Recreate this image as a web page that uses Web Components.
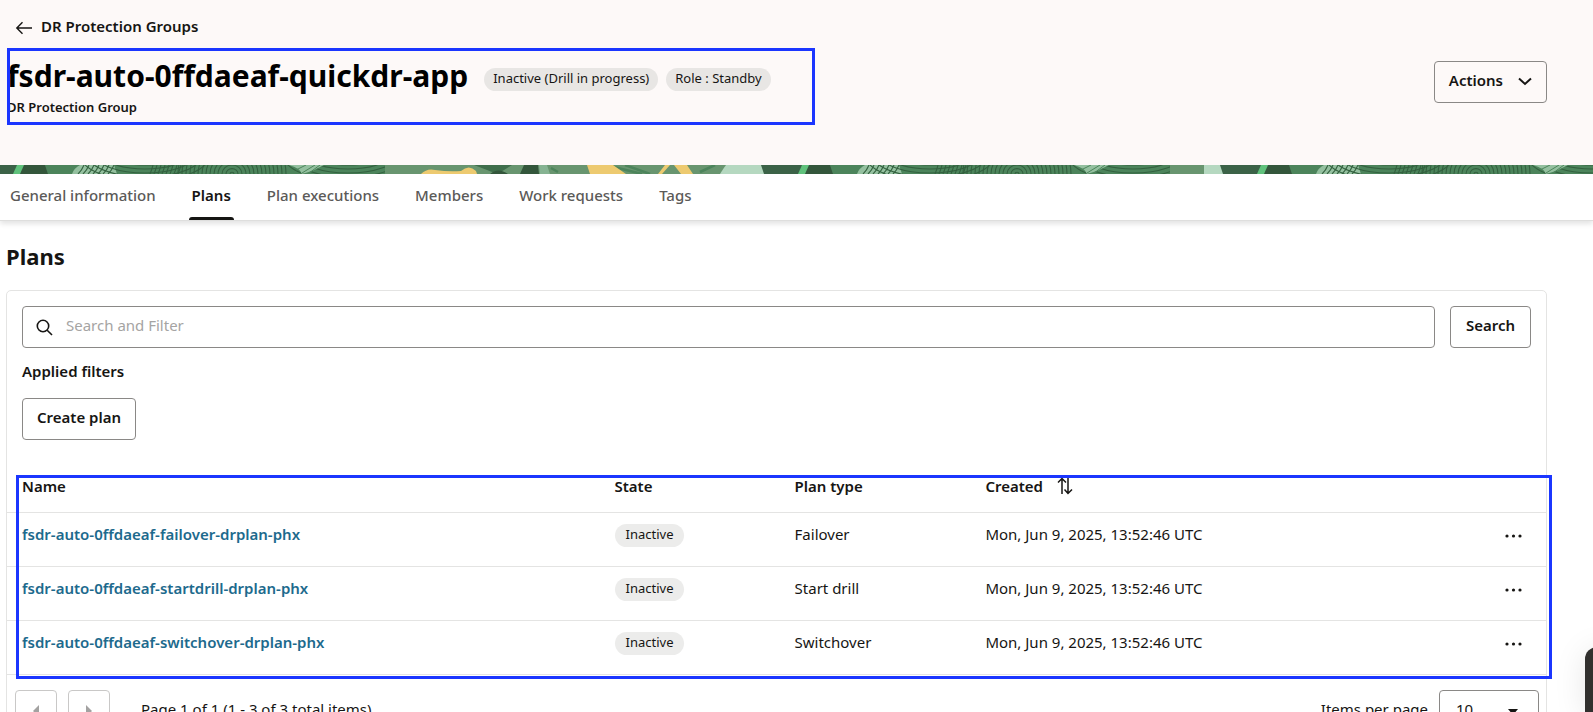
<!DOCTYPE html>
<html lang="en">
<head>
<meta charset="utf-8">
<title>DR Protection Group</title>
<style>
  html, body { margin: 0; height: 100%; }
  body {
    overflow: hidden;
    background: #fff;
    color: #161513;
    font: 15px/24px "Noto Sans", "Open Sans", sans-serif;
    --line: #e4e4e3;
    --control: #8a8886;
    --mark: #1b36ff;
  }
</style>
</head>
<body>
<group-page></group-page>

<template id="group-page">
  <style>
    :host { display: block; position: relative; height: 100vh; overflow: hidden; }
  </style>
  <page-header></page-header>
  <accent-strip></accent-strip>
  <tab-bar></tab-bar>
  <plans-panel></plans-panel>
  <help-handle></help-handle>
</template>

<template id="page-header">
  <style>
    :host { display: flex; justify-content: space-between; align-items: flex-start; height: 165px; background: #fdf9f8; padding: 0 46px 0 7px; box-sizing: border-box; }
    .back { display: inline-flex; align-items: center; gap: 8px; margin: 14px 0 10px 8px; color: inherit; text-decoration: none; font-weight: 600; }
    .back svg { margin-top: 4px; }
    .title { position: relative; width: 808px; height: 77px; }
    .row { display: flex; align-items: center; gap: 8px; padding-top: 8px; }
    h1 { margin: 0 8px 0 0; font-size: 30px; line-height: 40px; font-weight: 700; color: #000; }
    .row status-badge { margin-top: 6px; --badge: #e8e6e4; }
    p { margin: 1px 0 0; font-size: 13px; line-height: 20px; font-weight: 600; }
    ui-button { margin-top: 61px; }
  </style>
  <div>
    <a class="back" href="#">
      <svg width="18" height="14" viewBox="0 0 18 14" fill="none" stroke="#161513" stroke-width="1.4"><path d="M17 7H2M7.5 1.2 1.8 7l5.7 5.800"/></svg>
      <span>DR Protection Groups</span>
    </a>
    <div class="title">
      <div class="row">
        <h1>fsdr-auto-0ffdaeaf-quickdr-app</h1>
        <status-badge>Inactive (Drill in progress)</status-badge>
        <status-badge>Role : Standby</status-badge>
      </div>
      <p>DR Protection Group</p>
      <mark-frame></mark-frame>
    </div>
  </div>
  <ui-button>Actions
    <svg slot="icon" width="14" height="9" viewBox="0 0 14 9" fill="none" stroke="#161513" stroke-width="2"><path d="M1 1.500l6 5.500 6-5.500"/></svg>
  </ui-button>
</template>

<template id="status-badge">
  <style>
    :host { display: inline-block; padding: 0 var(--badge-pad, 9px); height: 23px; border-radius: 12px; background: var(--badge, #ececeb); font-size: 13px; line-height: 20px; white-space: nowrap; box-sizing: border-box; }
  </style>
  <slot></slot>
</template>

<template id="mark-frame">
  <style>
    :host { position: absolute; inset: var(--frame-inset, 0); border: 3px solid var(--mark); pointer-events: none; }
  </style>
</template>

<template id="ui-button">
  <style>
    :host { display: inline-block; }
    button { display: flex; align-items: center; gap: 15px; height: 42px; padding: 0 var(--button-pad, 14px) 4px; border: 1px solid var(--control); border-radius: 4px; background: transparent; color: inherit; font: inherit; font-weight: 600; white-space: nowrap; }
    ::slotted(svg) { margin-top: 2px; }
    .icon:not(.used) { display: none; }
  </style>
  <button type="button"><span><slot></slot></span><span class="icon"><slot name="icon"></slot></span></button>
</template>

<template id="accent-strip">
  <style>
    :host { display: block; height: 9px; overflow: hidden; background: #68956f; }
    svg { display: block; width: 100%; height: 9px; }
  </style>
  <svg aria-hidden="true">
    <defs>
      <clipPath id="field"><path d="M72 9Q74 3 80 0H385V9z"/></clipPath>
      <g id="tile">
        <path fill="#b5d8c0" d="M-60 9Q-56 4-54 0H0V9z"/>
        <path fill="#3b6247" d="M-24 0H50V9H-21z"/>
        <path fill="#33563b" d="M23 0h22l3 9H20z"/>
        <path fill="#60c27c" d="M17 0h7l-4 9h-7z"/>
        <path fill="#4c845b" d="M45 0H385V9H48z"/>
        <path fill="#94c09f" d="M72 9Q74 3 80 0H114l3 9z"/>
        <g clip-path="url(#field)" fill="none" stroke="#33613f" stroke-width="1.100" class="rings"></g>
        <path fill="#94c09f" d="M289 0H324L312 6 302 9Q300 3 289 0z"/>
        <path d="M296 5l10-5M302 8l13-8M309 8l11-8" stroke="#4c845b" fill="none"/>
        <path fill="#68956f" d="M385 0H767V9H385z"/>
        <path fill="#edca70" d="M421 9Q427 3 435 5 449 7 461 6 469-1 476 6L477 9z"/>
        <path fill="#3f6e4b" d="M474 0h38l-8 5-7 4-10-4z"/>
        <path fill="#33563b" d="M490 9Q498 2 508 9zM524 0h14l1 9H520z"/>
        <path fill="#86b392" d="M539 0h8l3 9H540z"/>
        <path d="M606 0l36 9M625 0l25 9M700 7l15-7M551 3l7 4" stroke="#4c845b" stroke-width="2.500"/>
        <path fill="#edca70" d="M587 0h26l13 9H590zM665 0h5l-8 9h-4zM674 0h13l6 9H681z"/>
        <path fill="#b5d8c0" d="M720 9Q723 4 726 0H763l3 9z"/>
      </g>
    </defs>
    <use href="#tile"/>
    <use href="#tile" x="785"/>
    <svg x="1204" width="800" height="9"><use href="#tile" x="40"/></svg>
  </svg>
</template>

<template id="tab-bar">
  <style>
    :host { display: block; height: 46px; background: #fff; border-bottom: 1px solid #dededd; box-shadow: 0 3px 5px #0000001c; }
    nav { display: flex; gap: 30px; padding-left: 7px; height: 100%; }
    a { padding: 9px 3px 0; box-sizing: border-box; color: #5b5a58; font-weight: 500; text-decoration: none; border-bottom: 3px solid transparent; white-space: nowrap; }
    a[aria-current] { position: relative; color: #161513; font-weight: 600; }
    a[aria-current]::after { content: ""; position: absolute; left: 0; right: 0; bottom: -3px; height: 3px; border-radius: 3px 3px 0 0; background: #161513; }
  </style>
  <nav>
    <a href="#">General information</a>
    <a href="#" aria-current="page">Plans</a>
    <a href="#">Plan executions</a>
    <a href="#">Members</a>
    <a href="#">Work requests</a>
    <a href="#">Tags</a>
  </nav>
</template>

<template id="plans-panel">
  <style>
    :host { display: block; padding: 19px 46px 0 6px; }
    h2 { margin: 0 0 18px; font-size: 22px; line-height: 32px; font-weight: 700; }
    .card { border: 1px solid var(--line); border-radius: 5px; }
    .tools { padding: 15px; display: grid; gap: 12px; }
    h3 { margin: 0; font-size: 15px; line-height: 22px; font-weight: 600; }
    .create { padding-top: 4px; }
  </style>
  <h2>Plans</h2>
  <div class="card">
    <div class="tools">
      <search-row></search-row>
      <h3>Applied filters</h3>
      <div class="create"><ui-button>Create plan</ui-button></div>
    </div>
    <plans-table></plans-table>
    <page-controls></page-controls>
  </div>
</template>

<template id="search-row">
  <style>
    :host { display: block; --button-pad: 15px; }
    form { display: flex; gap: 15px; }
    label { flex: 1; display: flex; align-items: center; gap: 13px; height: 42px; box-sizing: border-box; border: 1px solid var(--control); border-radius: 4px; padding-left: 13px; }
    input { flex: 1; border: 0; outline: 0; padding: 0 0 4px; background: none; font: inherit; color: inherit; }
    input::placeholder { color: #a5a4a3; opacity: 1; }
  </style>
  <form>
    <label>
      <svg width="17" height="17" viewBox="0 0 17 17" fill="none" stroke="#161513" stroke-width="1.600"><circle cx="7" cy="7" r="5.700"/><path d="M11.200 11.200 16 16"/></svg>
      <input type="text" placeholder="Search and Filter" aria-label="Search and Filter">
    </label>
    <ui-button>Search</ui-button>
  </form>
</template>

<template id="plans-table">
  <style>
    :host { display: block; position: relative; margin-top: 20px; --frame-inset: 0 -6px -4px 9px; --badge-pad: 11px; }
    table { width: 100%; border-collapse: separate; border-spacing: 0; table-layout: fixed; }
    th, td { padding: 0 0 0 15px; text-align: left; vertical-align: top; border-bottom: 1px solid var(--line); box-sizing: border-box; }
    th { height: 38px; font-weight: 600; }
    td { height: 54px; padding-top: 9px; }
    th { line-height: 22px; }
    .name { width: 38.5%; }
    .state { width: 11.7%; }
    .type { width: 12.400%; }
    .more { width: 55px; }
    td a { color: #1d6a8d; font-weight: 600; text-decoration: none; }
    td status-badge { vertical-align: top; margin-top: 2px; }
    .sort { display: inline-flex; gap: 14px; align-items: center; height: 22px; }
    .menu { border: 0; background: none; padding: 0; display: block; margin: 12px 0 0; line-height: 0; }
    td:last-child { padding-left: 14px; }
  </style>
  <table>
    <thead>
      <tr>
        <th class="name">Name</th>
        <th class="state">State</th>
        <th class="type">Plan type</th>
        <th><span class="sort">Created
          <svg width="16" height="18" viewBox="0 0 16 18" fill="none" stroke="#161513" stroke-width="1.500"><path d="M5 17V1.500M1 5.500l4-4 4 4M11 1v15.500M7.500 12.500l3.500 4 4-4"/></svg></span></th>
        <th class="more" aria-label="Row actions"></th>
      </tr>
    </thead>
    <tbody></tbody>
  </table>
  <mark-frame></mark-frame>
</template>

<template id="page-controls">
  <style>
    :host { display: flex; justify-content: space-between; padding: 15px 7px 12px 8px; }
    .group { display: flex; align-items: center; gap: 11px; }
    .step { width: 42px; height: 42px; padding: 0; border: 1px solid #c9c8c7; border-radius: 4px; background: #fff; display: grid; place-items: center; }
    .count { margin-left: 20px; padding-bottom: 4px; }
    label { display: flex; align-items: center; gap: 11px; }
    label > span:first-child { padding-bottom: 4px; }
    .box { position: relative; display: block; }
    select { appearance: none; width: 100px; height: 42px; padding: 0 16px 4px; border: 1px solid var(--control); border-radius: 4px; background: #fff; font: inherit; color: inherit; }
    .box svg { position: absolute; right: 21px; top: 19px; pointer-events: none; }
  </style>
  <div class="group">
    <button class="step" type="button" aria-label="Previous page"><svg width="8" height="12" viewBox="0 0 8 12"><path fill="#a3a2a1" d="M7 0v12L1 6z"/></svg></button>
    <button class="step" type="button" aria-label="Next page"><svg width="8" height="12" viewBox="0 0 8 12"><path fill="#a3a2a1" d="M1 0v12l6-6z"/></svg></button>
    <span class="count">Page 1 of 1 (1 - 3 of 3 total items)</span>
  </div>
  <label>
    <span>Items per page</span>
    <span class="box"><select><option>10</option><option>25</option></select><svg width="10" height="6" viewBox="0 0 10 6"><path fill="#161513" d="M0 0h10L5 6z"/></svg></span>
  </label>
</template>

<template id="help-handle">
  <style>
    :host { position: absolute; right: -32px; bottom: 0; width: 40px; height: 65px; background: #31302e; border-radius: 12px 0 0 0; box-shadow: 0 4px 32px #0000001a; }
  </style>
</template>

<script>
  const define = (name, setup) => customElements.define(name, class extends HTMLElement {
    constructor() {
      super();
      const root = this.attachShadow({ mode: "open" });
      root.append(document.getElementById(name).content.cloneNode(true));
      if (setup) setup(root, this);
    }
  });

  const plans = [
    ["fsdr-auto-0ffdaeaf-failover-drplan-phx", "Failover"],
    ["fsdr-auto-0ffdaeaf-startdrill-drplan-phx", "Start drill"],
    ["fsdr-auto-0ffdaeaf-switchover-drplan-phx", "Switchover"]
  ];

  define("mark-frame");
  define("status-badge");
  define("ui-button", root => {
    const slot = root.querySelector('slot[name="icon"]');
    slot.addEventListener("slotchange", () => slot.parentNode.classList.toggle("used", slot.assignedNodes().length > 0));
  });
  define("accent-strip", root => {
    const rings = root.querySelector(".rings");
    let marks = "";
    for (let r = 2; r < 56; r += 4) marks += `<ellipse cx="232" cy="9" rx="${r}" ry="${r * 0.9}"/>`;
    for (let r = 4; r < 48; r += 8) marks += `<ellipse cx="145" cy="-9" rx="${r + 20}" ry="${r * 0.5 + 3}"/><ellipse cx="348" cy="-9" rx="${r + 20}" ry="${r * 0.5 + 3}"/>`;
    for (let x = 84; x < 116; x += 5) marks += `<path d="M${x} 0q-2 5-6 9"/>`;
    for (let x = 150; x < 180; x += 4) marks += `<path d="M${x + 3} 0q-1 4-3 9"/>`;
    rings.innerHTML = marks;
  });
  define("tab-bar");
  define("search-row");
  define("plans-table", root => {
    root.querySelector("tbody").innerHTML = plans.map(([name, type]) => `
      <tr>
        <td><a href="#">${name}</a></td>
        <td><status-badge>Inactive</status-badge></td>
        <td>${type}</td>
        <td>Mon, Jun 9, 2025, 13:52:46 UTC</td>
        <td><button class="menu" type="button" aria-label="Actions for ${name}"><svg width="17" height="4" viewBox="0 0 17 4" fill="#161513"><circle cx="2" cy="2" r="1.600"/><circle cx="8.500" cy="2" r="1.600"/><circle cx="15" cy="2" r="1.600"/></svg></button></td>
      </tr>`).join("");
  });
  define("page-controls");
  define("plans-panel");
  define("page-header");
  define("help-handle");
  define("group-page");
</script>
</body>
</html>
